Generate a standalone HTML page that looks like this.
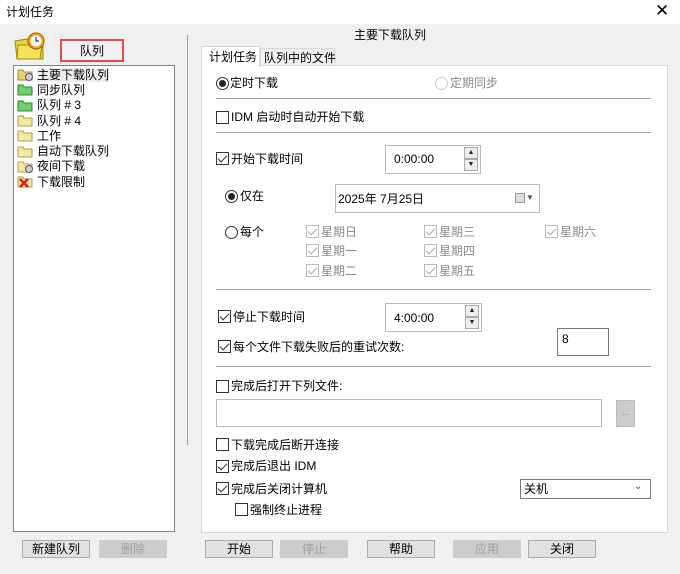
<!DOCTYPE html>
<html><head><meta charset="utf-8"><style>
*{box-sizing:border-box;margin:0;padding:0}
body{width:680px;height:574px;background:#f0f0f0;font:12px "Liberation Sans","Noto Sans CJK SC",sans-serif;color:#000;position:relative;overflow:hidden}
.a{position:absolute;white-space:nowrap}
.t{line-height:14px}
.cb{position:absolute;width:13px;height:13px;border:1px solid #333;background:#fff}
.cb.d{border-color:#bbb}
.cb.c::after{content:"";position:absolute;left:3px;top:0px;width:4px;height:8px;border:solid #333;border-width:0 1.5px 1.5px 0;transform:rotate(45deg)}
.cb.d.c::after{border-color:#aaa}
.rb{position:absolute;width:13px;height:13px;border:1px solid #333;border-radius:50%;background:#fff}
.rb.d{border-color:#ccc}
.rb.c::after{content:"";position:absolute;left:2px;top:2px;width:7px;height:7px;border-radius:50%;background:#222}
.sep{position:absolute;height:2px;border-top:1px solid #a0a0a0;border-bottom:1px solid #fff}
.box{position:absolute;background:#fff;border:1px solid #bbb}
.btn{position:absolute;height:18px;width:68px;border:1px solid #adadad;background:#e1e1e1;text-align:center;line-height:16px}
.btn.d{color:#a0a0a0;border-color:#cfcfcf;background:#ccc}
.g{color:#8a8a8a}
.spin{position:absolute;width:14px;border:1px solid #aaa;background:#eee;font-size:7px;line-height:10px;text-align:center;color:#222}
.li{height:15.3px;display:flex;align-items:center;gap:4px}
</style></head><body>
<div class="a" style="left:0;top:0;width:680px;height:24px;background:#fff"></div>
<div class="a t" style="left:6px;top:5px">计划任务</div>
<div class="a" style="left:655px;top:1px;font-size:17px">✕</div>

<svg class="a" style="left:13px;top:31px" width="36" height="30"><path d="M2 10 L14 8 L18 12 L30 12 L30 28 L4 28 Z" fill="#e8d23a" stroke="#9a8a10"/><path d="M5 14 L29 14 L27 28 L4 28 Z" fill="#f5e25a" stroke="#9a8a10"/><circle cx="23" cy="10" r="8" fill="#f6a020" stroke="#a05a00"/><circle cx="23" cy="10" r="5.5" fill="#fff"/><path d="M23 6 V10 H26" stroke="#000" fill="none"/></svg>
<div class="a" style="left:60px;top:39px;width:64px;height:23px;border:2px solid #e64a4a;text-align:center;line-height:20px">队列</div>

<div class="box" style="left:13px;top:65px;width:162px;height:467px;border-color:#828282"></div>
<div class="a t" style="left:17px;top:67px">
<div class="li"><svg width="16" height="13"><path d="M1 2h5l1 2h8v8H1z" fill="#e8d070" stroke="#a08a30"/><circle cx="12" cy="9" r="3.5" fill="#ccd" stroke="#556"/></svg><span style="background:#eee">主要下载队列</span></div>
<div class="li"><svg width="16" height="13"><path d="M1 2h5l1 2h8v8H1z" fill="#6fcf6f" stroke="#2e8a2e"/></svg>同步队列</div>
<div class="li"><svg width="16" height="13"><path d="M1 2h5l1 2h8v8H1z" fill="#6fcf6f" stroke="#2e8a2e"/></svg>队列 # 3</div>
<div class="li"><svg width="16" height="13"><path d="M1 2h5l1 2h8v8H1z" fill="#f6e8a0" stroke="#b0a050"/></svg>队列 # 4</div>
<div class="li"><svg width="16" height="13"><path d="M1 2h5l1 2h8v8H1z" fill="#f6e8a0" stroke="#b0a050"/></svg>工作</div>
<div class="li"><svg width="16" height="13"><path d="M1 2h5l1 2h8v8H1z" fill="#f6e8a0" stroke="#b0a050"/></svg>自动下载队列</div>
<div class="li"><svg width="16" height="13"><path d="M1 2h5l1 2h8v8H1z" fill="#f6e8a0" stroke="#b0a050"/><circle cx="12" cy="9" r="3.5" fill="#ccd" stroke="#556"/></svg>夜间下载</div>
<div class="li"><svg width="16" height="13"><path d="M1 2h5l1 2h8v8H1z" fill="#f6e8a0" stroke="#b0a050"/><path d="M3 4l8 8M11 4l-8 8" stroke="#d02020" stroke-width="2.5"/></svg>下载限制</div>
</div>

<div class="a" style="left:187px;top:35px;width:1px;height:410px;background:#a0a0a0"></div>
<div class="a t" style="left:354px;top:28px">主要下载队列</div>

<div class="box" style="left:201px;top:65px;width:467px;height:468px;border-color:#d9d9d9"></div>
<div class="a t" style="left:201px;top:46px;width:59px;height:21px;background:#fff;border:1px solid #d9d9d9;border-bottom:none;padding:3px 0 0 7px">计划任务</div>
<div class="a t" style="left:260px;top:48px;width:75px;height:17px;background:#f0f0f0;border:1px solid #d9d9d9;border-bottom:none;padding:2px 0 0 3px">队列中的文件</div>

<div class="rb c" style="left:216px;top:77px"></div><div class="a t" style="left:230px;top:76px">定时下载</div>
<div class="rb d" style="left:435px;top:77px"></div><div class="a t g" style="left:450px;top:76px">定期同步</div>
<div class="sep" style="left:216px;top:98px;width:435px"></div>
<div class="cb" style="left:216px;top:111px"></div><div class="a t" style="left:231px;top:110px">IDM 启动时自动开始下载</div>
<div class="sep" style="left:216px;top:132px;width:435px"></div>

<div class="cb c" style="left:216px;top:152px"></div><div class="a t" style="left:231px;top:152px">开始下载时间</div>
<div class="box" style="left:385px;top:145px;width:96px;height:29px"></div><div class="a t" style="left:394px;top:152px">0:00:00</div>
<div class="spin" style="left:464px;top:147px;height:12px">▲</div><div class="spin" style="left:464px;top:159px;height:12px">▼</div>

<div class="rb c" style="left:225px;top:190px"></div><div class="a t" style="left:240px;top:189px">仅在</div>
<div class="box" style="left:335px;top:184px;width:205px;height:29px"></div><div class="a t" style="left:338px;top:192px">2025年  7月25日</div>
<div class="a" style="left:515px;top:193px;width:10px;height:10px;border:1px solid #999;background:#ddd"></div><div class="a" style="left:526px;top:193px;font-size:8px;color:#456">▼</div>

<div class="rb" style="left:225px;top:226px"></div><div class="a t" style="left:240px;top:225px">每个</div>
<div class="cb d c" style="left:306px;top:225px"></div><div class="a t g" style="left:321px;top:225px">星期日</div>
<div class="cb d c" style="left:424px;top:225px"></div><div class="a t g" style="left:439px;top:225px">星期三</div>
<div class="cb d c" style="left:545px;top:225px"></div><div class="a t g" style="left:560px;top:225px">星期六</div>
<div class="cb d c" style="left:306px;top:244px"></div><div class="a t g" style="left:321px;top:244px">星期一</div>
<div class="cb d c" style="left:424px;top:244px"></div><div class="a t g" style="left:439px;top:244px">星期四</div>
<div class="cb d c" style="left:306px;top:264px"></div><div class="a t g" style="left:321px;top:264px">星期二</div>
<div class="cb d c" style="left:424px;top:264px"></div><div class="a t g" style="left:439px;top:264px">星期五</div>
<div class="sep" style="left:216px;top:289px;width:435px"></div>

<div class="cb c" style="left:218px;top:310px"></div><div class="a t" style="left:233px;top:310px">停止下载时间</div>
<div class="box" style="left:385px;top:303px;width:97px;height:29px"></div><div class="a t" style="left:394px;top:311px">4:00:00</div>
<div class="spin" style="left:465px;top:305px;height:12px">▲</div><div class="spin" style="left:465px;top:317px;height:12px">▼</div>
<div class="cb c" style="left:218px;top:340px"></div><div class="a t" style="left:233px;top:340px">每个文件下载失败后的重试次数:</div>
<div class="box" style="left:557px;top:328px;width:52px;height:28px;border-color:#777"></div><div class="a t" style="left:562px;top:332px">8</div>
<div class="sep" style="left:216px;top:366px;width:435px"></div>

<div class="cb" style="left:216px;top:380px"></div><div class="a t" style="left:231px;top:379px">完成后打开下列文件:</div>
<div class="box" style="left:216px;top:399px;width:386px;height:28px"></div>
<div class="a" style="left:616px;top:400px;width:19px;height:27px;background:#ccc;border:1px solid #bbb;color:#888;font-size:9px;text-align:center;line-height:22px">...</div>
<div class="cb" style="left:216px;top:438px"></div><div class="a t" style="left:231px;top:438px">下载完成后断开连接</div>
<div class="cb c" style="left:216px;top:460px"></div><div class="a t" style="left:231px;top:459px">完成后退出 IDM</div>
<div class="cb c" style="left:216px;top:482px"></div><div class="a t" style="left:231px;top:482px">完成后关闭计算机</div>
<div class="box" style="left:520px;top:479px;width:131px;height:20px;border-color:#7a7a7a"></div><div class="a t" style="left:524px;top:482px">关机</div><div class="a" style="left:634px;top:481px;font-size:10px;color:#555">⌄</div>
<div class="cb" style="left:235px;top:503px"></div><div class="a t" style="left:250px;top:503px">强制终止进程</div>

<div class="btn" style="left:22px;top:540px">新建队列</div>
<div class="btn d" style="left:99px;top:540px">删除</div>
<div class="btn" style="left:205px;top:540px">开始</div>
<div class="btn d" style="left:280px;top:540px">停止</div>
<div class="btn" style="left:367px;top:540px">帮助</div>
<div class="btn d" style="left:453px;top:540px">应用</div>
<div class="btn" style="left:528px;top:540px">关闭</div>
</body></html>
